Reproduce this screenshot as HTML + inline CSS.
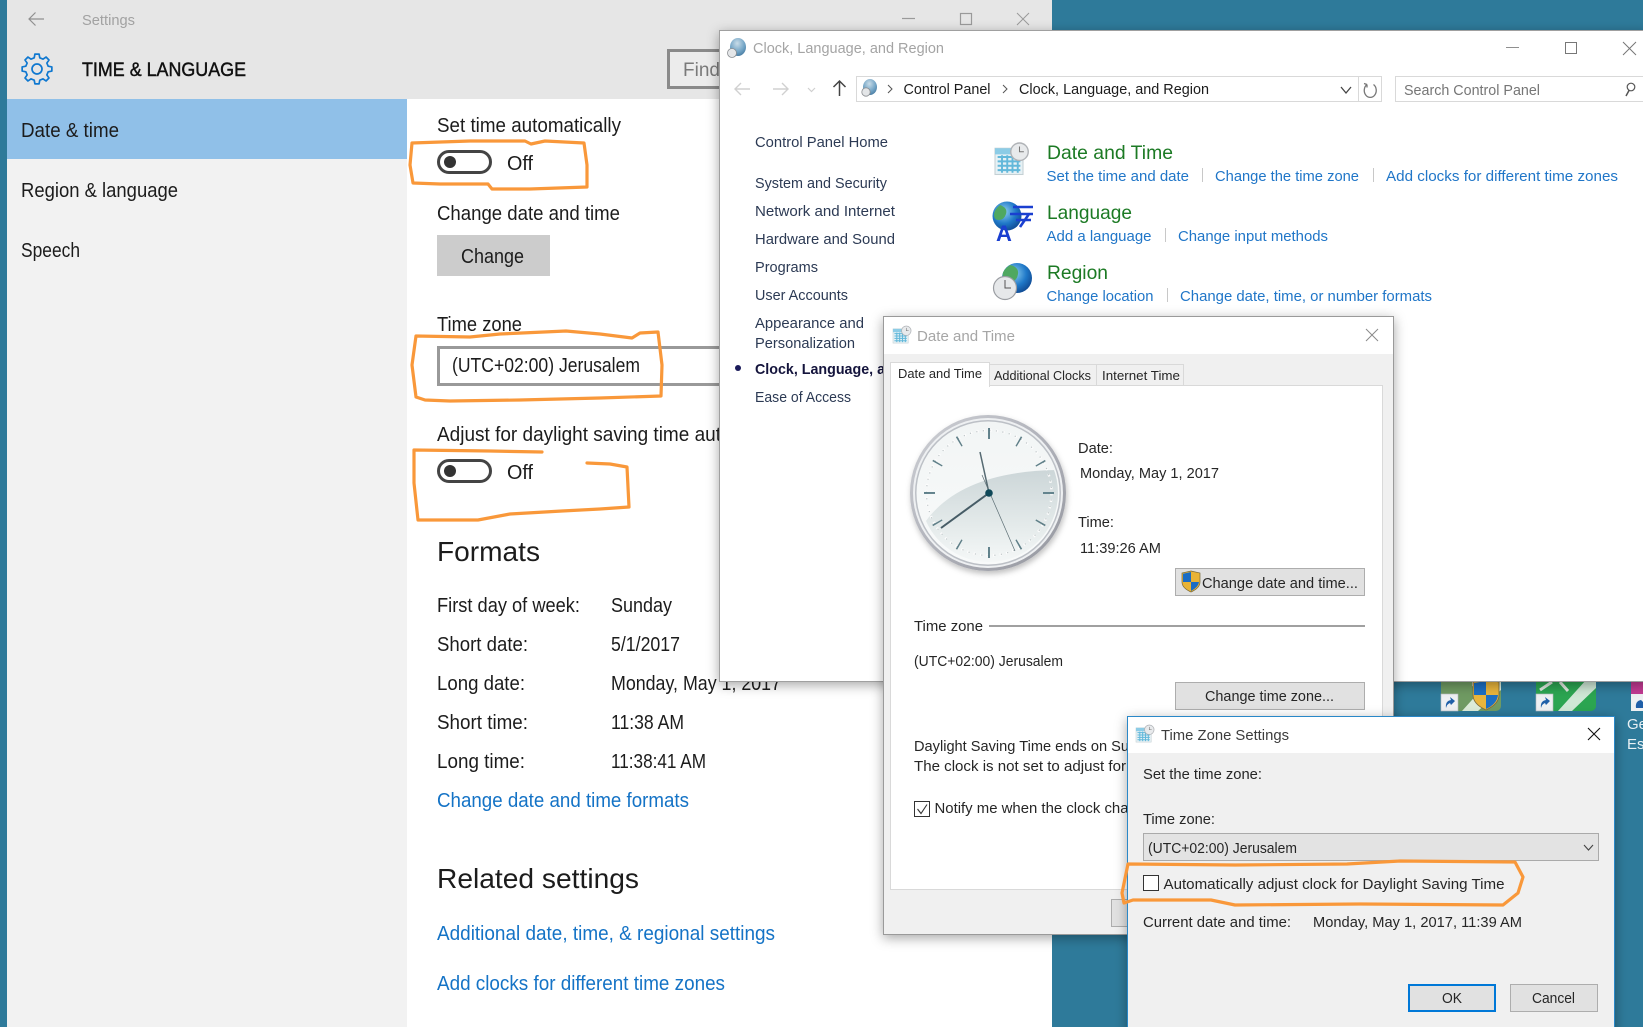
<!DOCTYPE html>
<html>
<head>
<meta charset="utf-8">
<title>Settings</title>
<style>
html,body{margin:0;padding:0;background:#2e7a9a;width:1643px;height:1027px;overflow:hidden}
svg{display:block}
text{font-family:"Liberation Sans",sans-serif;white-space:pre}
.s{font-size:20px;fill:#1c1c1c}
.l{font-size:20px;fill:#1473c6}
.h{font-size:28px;fill:#1c1c1c}
.n{font-size:15px;fill:#2c3a54}
.g{font-size:19.5px;fill:#1c7a24}
.k{font-size:15px;fill:#2076c8}
.d{font-size:14.5px;fill:#262626}
.t{font-size:13px;fill:#262626}
</style>
</head>
<body>
<svg width="1643" height="1027" viewBox="0 0 1643 1027" xmlns="http://www.w3.org/2000/svg">
<defs>
<filter id="sh" x="-6%" y="-6%" width="112%" height="112%"><feDropShadow dx="0" dy="3" stdDeviation="6" flood-color="#000" flood-opacity=".35"/></filter>
<filter id="csh" x="-15%" y="-15%" width="130%" height="130%"><feDropShadow dx="1" dy="3" stdDeviation="3" flood-color="#000" flood-opacity=".25"/></filter>
<radialGradient id="globe" cx=".4" cy=".35" r=".75"><stop offset="0" stop-color="#8fd0f0"/><stop offset=".55" stop-color="#1f78c8"/><stop offset="1" stop-color="#0c3f86"/></radialGradient>
<radialGradient id="tglobe" cx=".45" cy=".3" r=".8"><stop offset="0" stop-color="#c9dce8"/><stop offset=".6" stop-color="#6fa2c4"/><stop offset="1" stop-color="#3d6f96"/></radialGradient>
<linearGradient id="ring" x1="0" y1="0" x2="1" y2="1"><stop offset="0" stop-color="#cfd1d6"/><stop offset=".5" stop-color="#b0b2ba"/><stop offset="1" stop-color="#94969e"/></linearGradient>
<linearGradient id="face" x1="0" y1="0" x2="0" y2="1"><stop offset="0" stop-color="#f2f5f5"/><stop offset="1" stop-color="#f8fafa"/></linearGradient>
<linearGradient id="shade" x1="0" y1="0" x2="0" y2="1"><stop offset="0" stop-color="#ccd6d8"/><stop offset=".6" stop-color="#e6ecec"/><stop offset="1" stop-color="#f8fafa"/></linearGradient>
<clipPath id="faceclip"><circle cx="989" cy="493" r="69"/></clipPath>
<g id="cal">
<rect x="0" y="3" width="16" height="15" fill="#e6f1f5" stroke="#c4d0d4" stroke-width=".6"/>
<rect x="0" y="3" width="16" height="3.5" fill="#8ccce6"/>
<path d="M1.5 8h13M1.5 10.5h13M1.5 13h13M1.5 15.5h13M4 7v10M7 7v10M10 7v10M13 7v10" stroke="#62b8da" stroke-width="1.1" fill="none"/>
<circle cx="14" cy="5" r="5" fill="#e8eaec" stroke="#b0b3b7" stroke-width=".8"/>
<path d="M14 2v3h2.5" stroke="#777" stroke-width=".6" fill="none"/>
</g>
</defs>

<!-- desktop -->
<rect width="1643" height="1027" fill="#2e7a9a"/>

<!-- desktop icons -->
<rect x="1441" y="676" width="60" height="35" rx="5" fill="#6f9a62"/>
<path d="M1462 711 L1490 680 H1501 V690 L1478 711Z" fill="#dcebd8"/>
<path d="M1472 680 h9 l-5 8 -4 -2z" fill="#e6e6e0"/>
<path d="M1486 680 l13 2 v13 q0 9 -13 15 q-13 -6 -13 -15 v-13z" fill="#e9b53c" stroke="#7c6a3c" stroke-width=".8"/>
<path d="M1486 681 l-12 2 v12 h12z M1486 695 h12 q-1 9 -12 14z" fill="#1c6fc4"/>
<rect x="1441" y="694" width="17" height="17" fill="#eef0f2" stroke="#b8bcc0" stroke-width=".6"/>
<path d="M1446 708 q-1 -7 5 -8 l-1 -3 5 4 -4 4 -1 -2 q-3 1 -4 5z" fill="#1f5fa8"/>
<rect x="1536" y="676" width="60" height="35" rx="5" fill="#2ba551"/>
<path d="M1558 711 L1586 680 H1596 V688 L1572 711Z" fill="#cfe8d6"/>
<path d="M1540 690 L1552 682 M1560 682 L1568 691" stroke="#dfe9df" stroke-width="3" fill="none"/>
<rect x="1536" y="694" width="17" height="17" fill="#eef0f2" stroke="#b8bcc0" stroke-width=".6"/>
<path d="M1541 708 q-1 -7 5 -8 l-1 -3 5 4 -4 4 -1 -2 q-3 1 -4 5z" fill="#1f5fa8"/>
<rect x="1631" y="676" width="12" height="35" fill="#c23a92"/>
<rect x="1631" y="694" width="12" height="17" fill="#eef0f2"/>
<path d="M1636 708 q-1 -7 5 -8 l2 2 v6z" fill="#1f5fa8"/>
<text x="1627" y="729" font-size="15" fill="#e8f0f4">Ge</text>
<text x="1627" y="749" font-size="15" fill="#e8f0f4">Es</text>

<!-- SETTINGS WINDOW -->
<rect x="7" y="0" width="1045" height="1027" fill="#fff"/>
<rect x="7" y="0" width="1045" height="99" fill="#e6e6e6"/>
<rect x="7" y="99" width="400" height="928" fill="#f2f2f2"/>
<rect x="7" y="99" width="400" height="60" fill="#90c0e8"/>

<path d="M44 19H29M35.5 12.5L29 19l6.5 6.5" stroke="#8f8f8f" stroke-width="1.2" fill="none"/>
<text x="82" y="25" font-size="14.5" fill="#a2a2a2" textLength="53" lengthAdjust="spacingAndGlyphs">Settings</text>
<g transform="translate(37,69)" fill="none" stroke="#0f78d0" stroke-width="1.7" stroke-linejoin="round">
<path d="M-2.78-11.16L-2.09-14.85L2.09-14.85L2.78-11.16L5.93-9.86L9.02-11.98L11.98-9.02L9.86-5.93L11.16-2.78L14.85-2.09L14.85 2.09L11.16 2.78L9.86 5.93L11.98 9.02L9.02 11.98L5.93 9.86L2.78 11.16L2.09 14.85L-2.09 14.85L-2.78 11.16L-5.93 9.86L-9.02 11.98L-11.98 9.02L-9.86 5.93L-11.16 2.78L-14.85 2.09L-14.85-2.09L-11.16-2.78L-9.86-5.93L-11.98-9.02L-9.02-11.98L-5.93-9.86Z"/>
<circle r="5"/>
</g>
<text x="82" y="76" font-size="19" fill="#111" stroke="#111" stroke-width=".45" textLength="164" lengthAdjust="spacingAndGlyphs">TIME &amp; LANGUAGE</text>
<rect x="668.5" y="50.5" width="100" height="37" fill="#ececec" stroke="#8a8a8a" stroke-width="3"/>
<text x="683" y="76" font-size="19" fill="#7a7a7a">Find</text>

<text class="s" x="21" y="137" textLength="98" lengthAdjust="spacingAndGlyphs">Date &amp; time</text>
<text class="s" x="21" y="197" textLength="157" lengthAdjust="spacingAndGlyphs">Region &amp; language</text>
<text class="s" x="21" y="257" textLength="59" lengthAdjust="spacingAndGlyphs">Speech</text>

<text class="s" x="437" y="132" textLength="184" lengthAdjust="spacingAndGlyphs">Set time automatically</text>
<rect x="438.5" y="151.5" width="52" height="21" rx="10.5" fill="#fff" stroke="#444" stroke-width="3"/>
<circle cx="450" cy="162" r="6" fill="#333"/>
<text class="s" x="507" y="170" textLength="26" lengthAdjust="spacingAndGlyphs">Off</text>

<text class="s" x="437" y="220" textLength="183" lengthAdjust="spacingAndGlyphs">Change date and time</text>
<rect x="437" y="235" width="113" height="41" fill="#cccccc"/>
<text class="s" x="461" y="263" textLength="63" lengthAdjust="spacingAndGlyphs">Change</text>

<text class="s" x="437" y="331" textLength="85" lengthAdjust="spacingAndGlyphs">Time zone</text>
<rect x="438.5" y="347.5" width="330" height="37" fill="#fff" stroke="#999" stroke-width="3"/>
<text class="s" x="452" y="372" textLength="188" lengthAdjust="spacingAndGlyphs">(UTC+02:00) Jerusalem</text>

<text class="s" x="437" y="441" textLength="284" lengthAdjust="spacingAndGlyphs">Adjust for daylight saving time aut</text>
<rect x="438.5" y="460.5" width="52" height="21" rx="10.5" fill="#fff" stroke="#444" stroke-width="3"/>
<circle cx="450" cy="471" r="6" fill="#333"/>
<text class="s" x="507" y="479" textLength="26" lengthAdjust="spacingAndGlyphs">Off</text>

<text class="h" x="437" y="561" textLength="103" lengthAdjust="spacingAndGlyphs">Formats</text>
<text class="s" x="437" y="612" textLength="143" lengthAdjust="spacingAndGlyphs">First day of week:</text>
<text class="s" x="611" y="612" textLength="61" lengthAdjust="spacingAndGlyphs">Sunday</text>
<text class="s" x="437" y="651" textLength="91" lengthAdjust="spacingAndGlyphs">Short date:</text>
<text class="s" x="611" y="651" textLength="69" lengthAdjust="spacingAndGlyphs">5/1/2017</text>
<text class="s" x="437" y="690" textLength="88" lengthAdjust="spacingAndGlyphs">Long date:</text>
<text class="s" x="611" y="690" textLength="170" lengthAdjust="spacingAndGlyphs">Monday, May 1, 2017</text>
<text class="s" x="437" y="729" textLength="91" lengthAdjust="spacingAndGlyphs">Short time:</text>
<text class="s" x="611" y="729" textLength="73" lengthAdjust="spacingAndGlyphs">11:38 AM</text>
<text class="s" x="437" y="768" textLength="88" lengthAdjust="spacingAndGlyphs">Long time:</text>
<text class="s" x="611" y="768" textLength="95" lengthAdjust="spacingAndGlyphs">11:38:41 AM</text>
<text class="l" x="437" y="807" textLength="252" lengthAdjust="spacingAndGlyphs">Change date and time formats</text>
<text class="h" x="437" y="888" textLength="202" lengthAdjust="spacingAndGlyphs">Related settings</text>
<text class="l" x="437" y="940" textLength="338" lengthAdjust="spacingAndGlyphs">Additional date, time, &amp; regional settings</text>
<text class="l" x="437" y="990" textLength="288" lengthAdjust="spacingAndGlyphs">Add clocks for different time zones</text>

<!-- settings window caption buttons -->
<path d="M902 18.5h13" stroke="#9a9a9a" stroke-width="1.2"/>
<rect x="960.5" y="13.5" width="11" height="11" fill="none" stroke="#9a9a9a" stroke-width="1.2"/>
<path d="M1017 13l12 12M1029 13l-12 12" stroke="#9a9a9a" stroke-width="1"/>

<!-- orange marks, settings side -->
<g fill="none" stroke="#f9983a" stroke-width="3.2" stroke-linejoin="round" stroke-linecap="round">
<path d="M412 143L470 141L525 141L531 144L545 141L584 143L587 165L587 187L530 189L492 189L488 184L440 184L413 183L410 165Z"/>
<path d="M416 336L470 337L500 334L566 331L600 334L632 338L640 333L658 332L662 365L661 396L600 398L520 400L450 401L425 400L416 397L412 365Z"/>
<path d="M542 452L490 451L414 450L414 483L418 520L478 520L510 514L562 511L600 509L629 507L627 467L610 464L587 463"/>
</g>

<!-- CONTROL PANEL WINDOW -->
<rect x="719.5" y="30.5" width="930" height="651" fill="#fff" stroke="#a0a0a0" filter="url(#sh)"/>

<ellipse cx="738" cy="47" rx="8" ry="9" fill="url(#tglobe)"/>
<circle cx="732" cy="53" r="4.5" fill="#e4e6e8" stroke="#8b8e92" stroke-width=".8"/>
<text x="753" y="53" font-size="14.5" fill="#a4a4a4" textLength="191" lengthAdjust="spacingAndGlyphs">Clock, Language, and Region</text>
<path d="M1506 47.5h13" stroke="#8f8f8f" stroke-width="1"/>
<rect x="1565.5" y="42.5" width="11" height="11" fill="none" stroke="#777" stroke-width="1"/>
<path d="M1623 42l13 13M1636 42l-13 13" stroke="#777" stroke-width="1"/>

<path d="M750 89H735M741 83l-6 6 6 6" stroke="#d0d0d0" stroke-width="1.4" fill="none"/>
<path d="M773 89h15M782 83l6 6-6 6" stroke="#d0d0d0" stroke-width="1.4" fill="none"/>
<path d="M808 88l3.5 3.5 3.5-3.5" stroke="#d0d0d0" stroke-width="1.2" fill="none"/>
<path d="M839.5 96V81M833.5 87l6-6 6 6" stroke="#444" stroke-width="1.5" fill="none"/>
<rect x="856.5" y="76.5" width="525" height="25" fill="#fff" stroke="#d9d9d9"/>
<path d="M1358.5 77v24" stroke="#d9d9d9"/>
<ellipse cx="870" cy="87" rx="7" ry="8" fill="url(#tglobe)"/>
<circle cx="866" cy="92" r="4.2" fill="#e4e6e8" stroke="#8b8e92" stroke-width=".8"/>
<path d="M888 85l4 4-4 4M1003 85l4 4-4 4" stroke="#555" stroke-width="1" fill="none"/>
<text x="903.5" y="94" font-size="15" fill="#1c1c1c" textLength="87" lengthAdjust="spacingAndGlyphs">Control Panel</text>
<text x="1019" y="94" font-size="15" fill="#1c1c1c" textLength="190" lengthAdjust="spacingAndGlyphs">Clock, Language, and Region</text>
<path d="M1341 87l5 6 5-6" stroke="#444" stroke-width="1.3" fill="none"/>
<path d="M1367 84.5a6 7 0 1 0 6.5 0M1367 84.5l-3-1M1367 84.5l0 3" stroke="#777" stroke-width="1.3" fill="none"/>
<rect x="1395.5" y="76.5" width="260" height="25" fill="#fff" stroke="#d9d9d9"/>
<text x="1404" y="95" font-size="15" fill="#767676" textLength="136" lengthAdjust="spacingAndGlyphs">Search Control Panel</text>
<circle cx="1631" cy="87" r="3.8" fill="none" stroke="#555" stroke-width="1.2"/>
<path d="M1629 90.5l-3 5.5" stroke="#555" stroke-width="1.5"/>

<text class="n" x="755" y="147" textLength="133" lengthAdjust="spacingAndGlyphs">Control Panel Home</text>
<text class="n" x="755" y="188" textLength="132" lengthAdjust="spacingAndGlyphs">System and Security</text>
<text class="n" x="755" y="216" textLength="140" lengthAdjust="spacingAndGlyphs">Network and Internet</text>
<text class="n" x="755" y="244" textLength="140" lengthAdjust="spacingAndGlyphs">Hardware and Sound</text>
<text class="n" x="755" y="272" textLength="63" lengthAdjust="spacingAndGlyphs">Programs</text>
<text class="n" x="755" y="300" textLength="93" lengthAdjust="spacingAndGlyphs">User Accounts</text>
<text class="n" x="755" y="328" textLength="109" lengthAdjust="spacingAndGlyphs">Appearance and</text>
<text class="n" x="755" y="348" textLength="100" lengthAdjust="spacingAndGlyphs">Personalization</text>
<circle cx="738" cy="368" r="3" fill="#1a1a5a"/>
<text class="n" x="755" y="374" style="font-weight:bold;fill:#14143c" textLength="130" lengthAdjust="spacingAndGlyphs">Clock, Language, a</text>
<text class="n" x="755" y="402" textLength="96" lengthAdjust="spacingAndGlyphs">Ease of Access</text>

<!-- CP icons -->
<use href="#cal" transform="translate(995,143) scale(1.75)"/>
<circle cx="1007" cy="216" r="14.5" fill="url(#globe)"/>
<path d="M1000 205q8 3 6 9t-7 6-5-5 6-10z" fill="#4fa860"/>
<text x="996" y="241" font-size="22" font-weight="bold" fill="#1a3fd0">A</text>
<path d="M1013 207h20M1010 214h23M1029 214l-9 13M1016 220h15" stroke="#1a3fd0" stroke-width="2.6" fill="none"/>
<circle cx="1017" cy="278" r="15" fill="url(#globe)"/>
<path d="M1010 265q9 2 8 9t-7 8-8-5 7-12z" fill="#4fa860"/>
<circle cx="1005" cy="288" r="11.5" fill="#e6e8ea" stroke="#9a9da2" stroke-width="1.2"/>
<path d="M1005 280v8h6" stroke="#555" stroke-width="1" fill="none"/>

<text class="g" x="1047" y="159" textLength="126" lengthAdjust="spacingAndGlyphs">Date and Time</text>
<text class="k" x="1046.5" y="181" textLength="142.5" lengthAdjust="spacingAndGlyphs">Set the time and date</text>
<path d="M1202.5 168v14M1373.5 168v14M1165.5 228v14M1167.5 288v14" stroke="#c8c8c8"/>
<text class="k" x="1215" y="181" textLength="144" lengthAdjust="spacingAndGlyphs">Change the time zone</text>
<text class="k" x="1386" y="181" textLength="232" lengthAdjust="spacingAndGlyphs">Add clocks for different time zones</text>
<text class="g" x="1047" y="219" textLength="85" lengthAdjust="spacingAndGlyphs">Language</text>
<text class="k" x="1046.5" y="241" textLength="105" lengthAdjust="spacingAndGlyphs">Add a language</text>
<text class="k" x="1178" y="241" textLength="150" lengthAdjust="spacingAndGlyphs">Change input methods</text>
<text class="g" x="1047" y="279" textLength="61" lengthAdjust="spacingAndGlyphs">Region</text>
<text class="k" x="1046.5" y="301" textLength="107" lengthAdjust="spacingAndGlyphs">Change location</text>
<text class="k" x="1180" y="301" textLength="252" lengthAdjust="spacingAndGlyphs">Change date, time, or number formats</text>

<!-- DATE AND TIME DIALOG -->
<rect x="883.5" y="316.5" width="510" height="618" fill="#f0f0f0" stroke="#9a9a9a" filter="url(#sh)"/>
<rect x="884" y="317" width="509" height="37" fill="#fff"/>
<use href="#cal" transform="translate(893,326) scale(.95)"/>
<text x="917" y="341" font-size="15" fill="#a6a6a6" textLength="98" lengthAdjust="spacingAndGlyphs">Date and Time</text>
<path d="M1366 329l12 12M1378 329l-12 12" stroke="#8a8a8a" stroke-width="1"/>

<rect x="890.5" y="385.5" width="492" height="504" fill="#fff" stroke="#d9d9d9"/>
<rect x="989.5" y="364.5" width="107" height="21" fill="#f0f0f0" stroke="#d9d9d9"/>
<rect x="1096.5" y="364.5" width="87" height="21" fill="#f0f0f0" stroke="#d9d9d9"/>
<rect x="890.5" y="362.5" width="99" height="24" fill="#fff" stroke="#d9d9d9"/>
<rect x="891" y="384" width="98" height="3" fill="#fff"/>
<text class="t" x="898" y="378" textLength="84" lengthAdjust="spacingAndGlyphs">Date and Time</text>
<text class="t" x="994" y="380" textLength="97" lengthAdjust="spacingAndGlyphs">Additional Clocks</text>
<text class="t" x="1102" y="380" textLength="78" lengthAdjust="spacingAndGlyphs">Internet Time</text>

<!-- clock -->
<circle cx="988" cy="493" r="78" fill="url(#ring)" filter="url(#csh)"/>
<circle cx="988" cy="493" r="75" fill="#eef0f2"/>
<circle cx="988" cy="493" r="73" fill="#bcc0c6"/>
<circle cx="988" cy="493" r="71.5" fill="url(#face)"/>
<path d="M920 530Q955 470 1062 470V570H920Z" fill="url(#shade)" clip-path="url(#faceclip)"/>
<circle cx="989" cy="493" r="62.5" fill="none" stroke="#fdfdfd" stroke-width="2.4" stroke-dasharray="2.4 4.15"/>
<circle cx="989" cy="493" r="62.5" fill="none" stroke="#bcc4c6" stroke-width="1.3" stroke-dasharray="1.1 5.45"/>
<circle cx="989" cy="493" r="59.5" fill="none" stroke="#5f7f88" stroke-width="11" stroke-dasharray="1.5 29.65" stroke-dashoffset=".75"/>
<path d="M989 428v11M989 547v11M924 493h11M1043 493h11" stroke="#5a7c86" stroke-width="1.8"/>
<path d="M989 493L980 452" stroke="#566a72" stroke-width="1.5"/>
<path d="M989 493L941 528" stroke="#465c66" stroke-width="2"/>
<path d="M982 475L1015 551" stroke="#5c6e74" stroke-width=".7"/>
<circle cx="989" cy="493" r="3.8" fill="#0f4858"/>

<text class="d" x="1078" y="453" textLength="35" lengthAdjust="spacingAndGlyphs">Date:</text>
<text class="d" x="1080" y="478" textLength="139" lengthAdjust="spacingAndGlyphs">Monday, May 1, 2017</text>
<text class="d" x="1078" y="527" textLength="36" lengthAdjust="spacingAndGlyphs">Time:</text>
<text class="d" x="1080" y="553" textLength="81" lengthAdjust="spacingAndGlyphs">11:39:26 AM</text>

<rect x="1175.5" y="568.5" width="189" height="27" fill="#e1e1e1" stroke="#adadad"/>
<path d="M1191 571l9 2v9q0 6-9 10q-9-4-9-10v-9z" fill="#e8b336" stroke="#7a6a3a" stroke-width=".7"/>
<path d="M1191 572l-8 1.8V582h8zM1191 582h8q-.5 5-8 9z" fill="#1a6cc4"/>
<text class="d" x="1202" y="588" textLength="156" lengthAdjust="spacingAndGlyphs">Change date and time...</text>

<text class="d" x="914" y="631" textLength="69" lengthAdjust="spacingAndGlyphs">Time zone</text>
<rect x="989" y="625" width="376" height="2" fill="#a0a0a0"/>
<text class="d" x="914" y="666" textLength="149" lengthAdjust="spacingAndGlyphs">(UTC+02:00) Jerusalem</text>
<rect x="1175.5" y="682.5" width="189" height="27" fill="#e1e1e1" stroke="#adadad"/>
<text class="d" x="1205" y="701" textLength="129" lengthAdjust="spacingAndGlyphs">Change time zone...</text>
<text class="d" x="914" y="751" textLength="215" lengthAdjust="spacingAndGlyphs">Daylight Saving Time ends on Su</text>
<text class="d" x="914" y="771" textLength="212" lengthAdjust="spacingAndGlyphs">The clock is not set to adjust for</text>
<rect x="914.5" y="801.5" width="15" height="15" fill="#fff" stroke="#333"/>
<path d="M917.5 809l3.5 4.5 6-9" stroke="#333" stroke-width="1.1" fill="none"/>
<text class="d" x="934.5" y="813" textLength="194" lengthAdjust="spacingAndGlyphs">Notify me when the clock cha</text>
<rect x="1111.5" y="899.5" width="40" height="27" fill="#e1e1e1" stroke="#adadad"/>

<!-- TIME ZONE SETTINGS DIALOG -->
<rect x="1127.5" y="716.5" width="487" height="320" fill="#f0f0f0" stroke="#2b88c8" filter="url(#sh)"/>
<rect x="1128" y="717" width="486" height="36" fill="#fff"/>
<use href="#cal" transform="translate(1136,725) scale(.95)"/>
<text x="1161" y="740" font-size="15" fill="#3c3c3c" textLength="128" lengthAdjust="spacingAndGlyphs">Time Zone Settings</text>
<path d="M1588 728l12 12M1600 728l-12 12" stroke="#111" stroke-width="1.1"/>
<text class="d" x="1143" y="779" textLength="119" lengthAdjust="spacingAndGlyphs">Set the time zone:</text>
<text class="d" x="1143" y="824" textLength="72" lengthAdjust="spacingAndGlyphs">Time zone:</text>
<rect x="1143.5" y="833.5" width="455" height="27" fill="#e3e3e3" stroke="#aaaaaa"/>
<text class="d" x="1148" y="853" textLength="149" lengthAdjust="spacingAndGlyphs">(UTC+02:00) Jerusalem</text>
<path d="M1584 845l4.5 5 4.5-5" stroke="#444" stroke-width="1.1" fill="none"/>
<rect x="1143.5" y="875.5" width="15" height="15" fill="#fff" stroke="#333"/>
<text class="d" x="1163.5" y="889" textLength="341" lengthAdjust="spacingAndGlyphs">Automatically adjust clock for Daylight Saving Time</text>
<text class="d" x="1143" y="927" textLength="148" lengthAdjust="spacingAndGlyphs">Current date and time:</text>
<text class="d" x="1313" y="927" textLength="209" lengthAdjust="spacingAndGlyphs">Monday, May 1, 2017, 11:39 AM</text>
<rect x="1409" y="985" width="86" height="26" fill="#e1e1e1" stroke="#0078d7" stroke-width="2"/>
<text class="d" x="1442" y="1003" textLength="20" lengthAdjust="spacingAndGlyphs">OK</text>
<rect x="1510.5" y="984.5" width="87" height="27" fill="#e1e1e1" stroke="#adadad"/>
<text class="d" x="1532" y="1003" textLength="43" lengthAdjust="spacingAndGlyphs">Cancel</text>

<!-- orange mark, dialog side -->
<path d="M1128 864L1235 865L1347 864L1400 861L1515 862L1523 877L1518 893L1503 905L1360 904L1235 905L1211 900L1133 900L1124 903L1122 893Z" fill="none" stroke="#f9983a" stroke-width="3.2" stroke-linejoin="round" stroke-linecap="round"/>
</svg>
</body>
</html>
